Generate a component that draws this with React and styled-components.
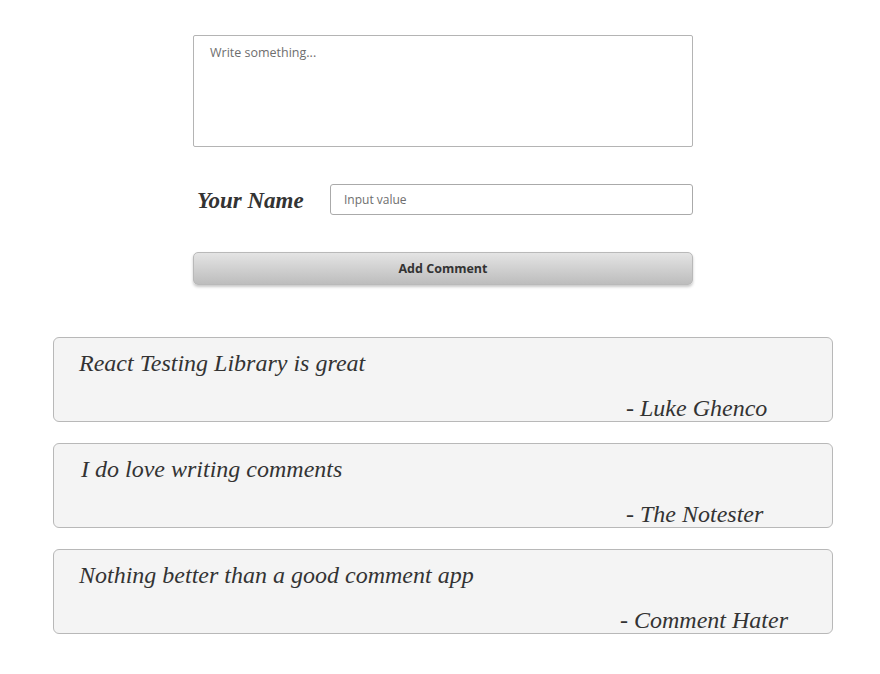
import React from "react";
import styled, { createGlobalStyle } from "styled-components";

const Global = createGlobalStyle`
  html, body { margin: 0; padding: 0; background: #fff; }
  body { font-family: "Open Sans", "Lato", sans-serif; }
`;

const Page = styled.main`
  padding: 35px 0 0 6px;
  display: flex;
  flex-direction: column;
  align-items: center;
`;

const Form = styled.form`
  width: 500px;
  display: flex;
  flex-direction: column;
  gap: 37px;
`;

const TextArea = styled.textarea`
  box-sizing: border-box;
  width: 500px;
  height: 112px;
  margin: 0;
  padding: 8px 16px;
  border: 1px solid #b4b4b4;
  border-radius: 2px;
  resize: none;
  font-family: "Open Sans", "Lato", sans-serif;
  font-size: 12.5px;
  color: #333;
  &::placeholder { color: #6e6e6e; }
  outline: none;
`;

const NameRow = styled.div`
  display: flex;
  align-items: center;
  justify-content: space-between;
  height: 31px;
  padding-left: 4px;
`;

const Label = styled.label`
  font-family: "Liberation Serif", "Times New Roman", serif;
  font-style: italic;
  font-weight: bold;
  font-size: 23px;
  color: #333;
  padding-top: 2px;
`;

const NameInput = styled.input`
  box-sizing: border-box;
  width: 363px;
  height: 31px;
  margin: 0;
  padding: 0 13px;
  border: 1px solid #aaa;
  border-radius: 3px;
  font-family: "Open Sans", "Lato", sans-serif;
  font-size: 12px;
  &::placeholder { color: #6e6e6e; }
  outline: none;
`;

const Button = styled.button`
  box-sizing: border-box;
  width: 500px;
  height: 33px;
  border: 1px solid #b9b9b9;
  border-radius: 5px;
  background: linear-gradient(#e4e4e4, #bdbdbd);
  box-shadow: 0 2px 3px rgba(0, 0, 0, 0.22);
  font-family: "Open Sans", "Lato", sans-serif;
  font-weight: bold;
  font-size: 12.5px;
  color: #333;
  cursor: pointer;
`;

const List = styled.section`
  margin-top: 52px;
  display: flex;
  flex-direction: column;
  gap: 21px;
`;

const Card = styled.article`
  box-sizing: border-box;
  width: 780px;
  height: 85px;
  border: 1px solid #b8b8b8;
  border-radius: 6px;
  background: #f4f4f4;
  padding: 11px 0 0 ${(p) => p.$indent}px;
  display: flex;
  flex-direction: column;
  font-family: "Liberation Serif", "Times New Roman", serif;
  font-style: italic;
  color: #333;
`;

const Text = styled.p`
  margin: 0;
  font-size: 24px;
  line-height: 28px;
`;

const Author = styled.p`
  margin: 17px 0 0 ${(p) => p.$offset}px;
  font-size: 24px;
  line-height: 28px;
`;

const comments = [
  { text: "React Testing Library is great", author: "Luke Ghenco", indent: 25, offset: 547 },
  { text: "I do love writing comments", author: "The Notester", indent: 27, offset: 545 },
  { text: "Nothing better than a good comment app", author: "Comment Hater", indent: 25, offset: 541 },
];

export default function App() {
  return (
    <>
      <Global />
      <Page>
        <Form onSubmit={(e) => e.preventDefault()}>
          <TextArea placeholder="Write something..." />
          <NameRow>
            <Label htmlFor="name">Your Name</Label>
            <NameInput id="name" placeholder="Input value" />
          </NameRow>
          <Button type="submit">Add Comment</Button>
        </Form>
        <List>
          {comments.map((c) => (
            <Card key={c.author} $indent={c.indent}>
              <Text>{c.text}</Text>
              <Author $offset={c.offset}>- {c.author}</Author>
            </Card>
          ))}
        </List>
      </Page>
    </>
  );
}
